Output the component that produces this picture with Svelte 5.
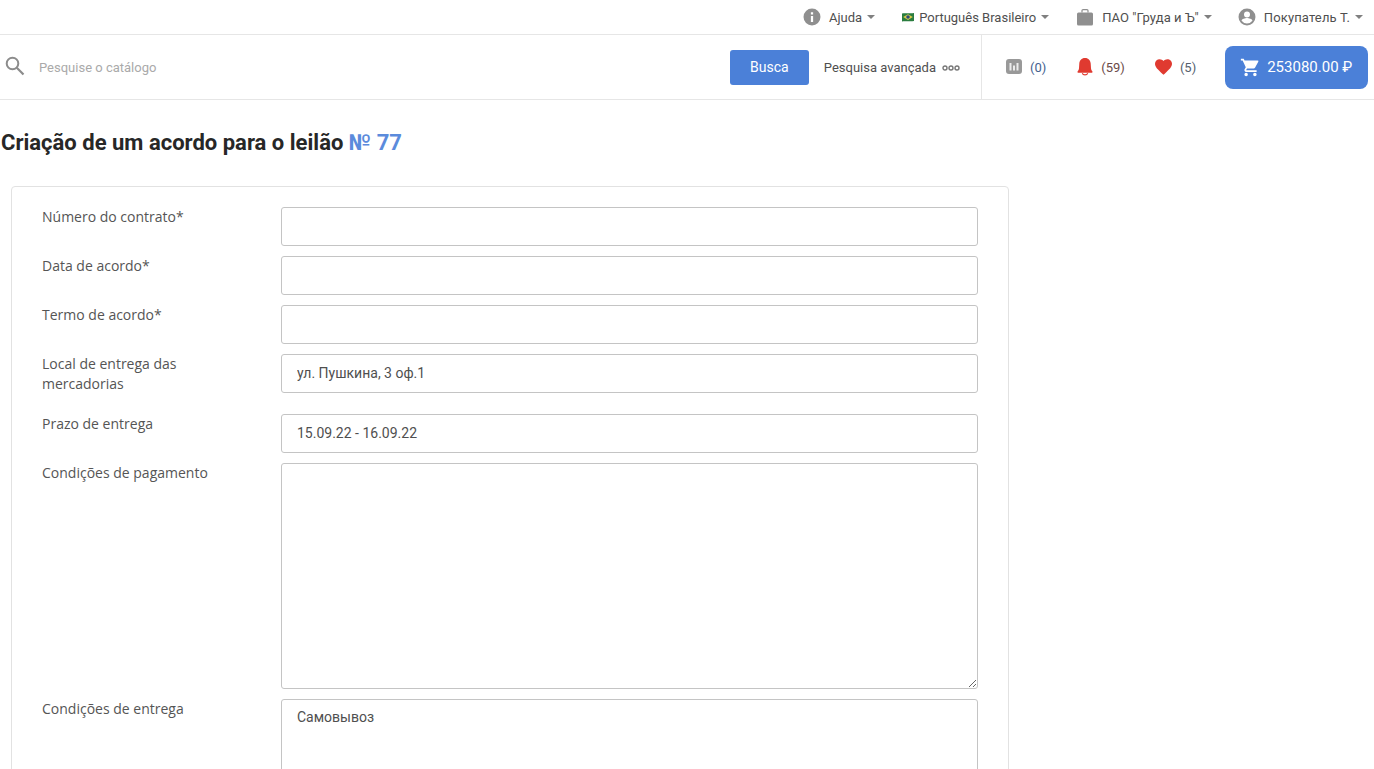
<script>
  const rows = [
    { label: 'Número do contrato*', value: '' },
    { label: 'Data de acordo*', value: '' },
    { label: 'Termo de acordo*', value: '' },
    { label: 'Local de entrega das mercadorias', value: 'ул. Пушкина, 3 оф.1' },
    { label: 'Prazo de entrega', value: '15.09.22 - 16.09.22' }
  ];
</script>

<div class="page">
  <div class="top-bar">
    <div class="top-item ajuda">
      <svg class="top-icon" viewBox="0 0 24 24"><path d="M12 .7a11.300 11.300 0 1 0 0 22.600A11.300 11.300 0 0 0 12 .7zm1.500 17.800h-3v-8h3zm0-10h-3V5.500h3z" fill-rule="evenodd" /></svg>
      <span>Ajuda</span>
      <i class="caret"></i>
    </div>
    <div class="top-item lang">
      <svg class="flag" viewBox="0 0 14 10">
        <path d="M1 1.500C4 .5 9 2 13 1v8C9 10 4 8.500 1 9.500z" fill="#2a7d3f" />
        <path d="M7 2.200 11.800 5 7 8 2.200 5z" fill="#dccc4e" />
        <circle cx="7" cy="5" r="1.800" fill="#2c4a7c" />
      </svg>
      <span>Português Brasileiro</span>
      <i class="caret"></i>
    </div>
    <div class="top-item company">
      <svg class="top-icon" viewBox="0 0 18 18">
        <path d="M6 4.500V2.600a1 1 0 0 1 1-1h4a1 1 0 0 1 1 1v1.900" fill="none" stroke="#8f8f8f" stroke-width="1.200" />
        <rect x="1" y="4.500" width="16" height="13" rx="1.500" />
      </svg>
      <span class="company-name">ПАО "Груда и Ъ"</span>
      <i class="caret"></i>
    </div>
    <div class="top-item user">
      <svg class="top-icon" viewBox="0 0 24 24"><path d="M12 .7a11.300 11.300 0 1 0 0 22.600A11.300 11.300 0 0 0 12 .7zM12 4.500a4 4 0 1 1 0 8 4 4 0 0 1 0-8zm0 16.200a8.900 8.900 0 0 1-7.200-3.700c.1-2.400 4.800-3.600 7.200-3.600s7.100 1.200 7.200 3.600A8.900 8.900 0 0 1 12 20.700z" fill-rule="evenodd" /></svg>
      <span class="user-name">Покупатель Т.</span>
      <i class="caret"></i>
    </div>
  </div>

  <div class="search-bar">
    <div class="search-left">
      <svg class="search-icon" viewBox="0 0 20 20" fill="none" stroke="#8c8c8c" stroke-width="2">
        <circle cx="7.500" cy="7.500" r="5.800" />
        <path d="M11.800 11.800 18.500 18.500" stroke-width="2.200" />
      </svg>
      <input class="search-input" placeholder="Pesquise o catálogo" />
      <button class="search-btn">Busca</button>
      <span class="advanced">Pesquisa avançada</span>
      <svg class="dots" viewBox="0 0 18 6" fill="none" stroke="#777" stroke-width="1.400">
        <circle cx="3" cy="3" r="2" />
        <circle cx="9" cy="3" r="2" />
        <circle cx="15" cy="3" r="2" />
      </svg>
    </div>
    <div class="search-right">
      <div class="counter compare">
        <svg class="compare-icon" viewBox="0 0 16 15">
          <rect width="16" height="15" rx="3" fill="#999" />
          <path d="M4.500 4v7.500M8 6.500v5M11.500 4v7.500" stroke="#ececec" stroke-width="2" />
        </svg>
        <span class="count-blue">(0)</span>
      </div>
      <div class="counter bell">
        <svg class="bell-icon" viewBox="0 0 16 18">
          <path d="M8 0c3.600 0 5.500 2.500 5.700 5.500l.3 4.700c.1 1.400.7 2.200 1.300 3 .5.700.1 1.600-.7 1.600H1.400c-.8 0-1.200-.9-.7-1.600.6-.8 1.200-1.600 1.300-3l.3-4.700C2.500 2.500 4.400 0 8 0z" fill="#e03a30" />
          <path d="M5.300 15.300a2.800 2.200 0 0 0 5.400 0" fill="none" stroke="#e03a30" stroke-width="1.100" />
        </svg>
        <span class="count-red">(59)</span>
      </div>
      <div class="counter heart">
        <svg class="heart-icon" viewBox="0 0 24 22">
          <path d="M12 22 10.300 20.400C4.100 14.800 0 11.100 0 6.500 0 2.800 2.900 0 6.600 0 8.700 0 10.700 1 12 2.500 13.300 1 15.300 0 17.400 0 21.100 0 24 2.800 24 6.500c0 4.600-4.100 8.300-10.300 13.900z" fill="#e03a30" />
        </svg>
        <span class="count-grey">(5)</span>
      </div>
      <button class="cart-btn">
        <svg class="cart-icon" viewBox="0 0 24 24"><path d="M7 18a2 2 0 1 0 0 4 2 2 0 0 0 0-4zM1 2v2h2l3.600 7.600-1.350 2.450A2 2 0 0 0 7 17h12v-2H7.420a.25.25 0 0 1-.25-.25l.03-.12.9-1.630h7.450c.75 0 1.410-.41 1.750-1.030l3.580-6.490A1 1 0 0 0 20 4H5.210l-.94-2zm16 16a2 2 0 1 0 0 4 2 2 0 0 0 0-4z" fill="#fff" /></svg>
        <span>253080.00 ₽</span>
      </button>
    </div>
  </div>

  <h1 class="title">Criação de um acordo para o leilão <span class="number">№ 77</span></h1>

  <div class="card">
    {#each rows as row}
      <div class="row">
        <label class="label">{row.label}</label>
        <input class="field" value={row.value} />
      </div>
    {/each}
    <div class="row">
      <label class="label">Condições de pagamento</label>
      <textarea class="field area"></textarea>
    </div>
    <div class="row">
      <label class="label">Condições de entrega</label>
      <textarea class="field area">Самовывоз</textarea>
    </div>
  </div>
</div>

<style>
  :global(body) {
    margin: 0;
    background: #fff;
  }

  .page {
    height: 769px;
    overflow: hidden;
    font-family: Roboto, sans-serif;
    color: #444;
  }

  .top-bar {
    display: flex;
    justify-content: flex-end;
    align-items: center;
    height: 34px;
    padding-right: 11px;
    border-bottom: 1px solid #e6e6e6;
    font-size: 13px;
  }

  .top-item {
    display: flex;
    align-items: center;
    margin-left: 26px;
    color: #4f4f4f;
  }

  .company {
    margin-left: 27px;
  }

  .company-name {
    letter-spacing: 0.07px;
  }

  .user-name {
    letter-spacing: 0.15px;
  }

  .top-icon {
    width: 18px;
    height: 18px;
    margin-right: 8px;
    fill: #8f8f8f;
  }

  .flag {
    width: 14px;
    height: 10px;
    margin-right: 4px;
  }

  .caret {
    width: 0;
    height: 0;
    margin-left: 5px;
    border-left: 4px solid transparent;
    border-right: 4px solid transparent;
    border-top: 4px solid #808080;
  }

  .search-bar {
    display: flex;
    height: 64px;
    border-bottom: 1px solid #e6e6e6;
  }

  .search-left {
    display: flex;
    align-items: center;
    width: 982px;
    padding-left: 5px;
    box-sizing: border-box;
    border-right: 1px solid #e6e6e6;
  }

  .search-icon {
    width: 20px;
    height: 20px;
    margin-top: -2px;
  }

  .search-input {
    flex: 1;
    min-width: 0;
    margin-left: 14px;
    padding: 0;
    border: none;
    outline: none;
    font: 13px Roboto, sans-serif;
  }

  .search-input::placeholder {
    color: #aaa;
    opacity: 1;
  }

  .search-btn {
    width: 79px;
    height: 35px;
    margin-right: 15px;
    border: none;
    border-radius: 3px;
    background: #4b80d8;
    color: #fff;
    font: 14px Roboto, sans-serif;
  }

  .advanced {
    font-size: 13px;
    color: #4f4f4f;
  }

  .dots {
    width: 18px;
    height: 6px;
    margin: 1px 21px 0 6px;
  }

  .search-right {
    display: flex;
    align-items: center;
    flex: 1;
    padding-left: 23px;
    font-size: 13px;
  }

  .counter {
    display: flex;
    align-items: center;
  }

  .compare {
    margin-right: 31px;
  }

  .bell {
    margin-right: 30px;
  }

  .heart {
    margin-right: 29px;
  }

  .compare-icon {
    width: 16px;
    height: 15px;
    margin: -2px 8px 0 1px;
  }

  .bell-icon {
    width: 16px;
    height: 18px;
    margin-right: 8px;
  }

  .heart-icon {
    width: 17px;
    height: 16px;
    margin-right: 8px;
  }

  .count-blue {
    color: #44618f;
  }

  .count-red {
    color: #6b4a48;
  }

  .count-grey {
    color: #555f6e;
  }

  .cart-btn {
    display: flex;
    align-items: center;
    width: 143px;
    height: 43px;
    padding: 0 0 0 15px;
    border: none;
    border-radius: 8px;
    background: #4b80d8;
    color: #fff;
    font: 15px Roboto, sans-serif;
  }

  .cart-icon {
    width: 21px;
    height: 21px;
    margin-right: 6px;
  }

  .title {
    margin: 30px 0 30px 1px;
    font-size: 22px;
    line-height: 26px;
    font-weight: 700;
    letter-spacing: 0.01px;
    color: #272727;
  }

  .number {
    color: #5b8bdc;
  }

  .card {
    width: 998px;
    box-sizing: border-box;
    margin-left: 11px;
    padding: 20px 30px 20px 30px;
    border: 1px solid #e2e2e2;
    border-radius: 4px;
  }

  .row {
    display: flex;
    align-items: flex-start;
    margin-bottom: 10px;
  }

  .label {
    width: 180px;
    margin: 0 59px 10px 0;
    font: 14px/20px "Open Sans", sans-serif;
    color: #555;
  }

  .field {
    flex: 1;
    min-width: 0;
    height: 39px;
    box-sizing: border-box;
    padding: 0 15px 1px;
    border: 1px solid #c4c4c4;
    border-radius: 3px;
    outline: none;
    font: 14px Roboto, sans-serif;
    color: #4f4f4f;
    background: #fff;
  }

  .area {
    display: block;
    height: 226px;
    padding-top: 9px;
    padding-bottom: 10px;
    line-height: 16px;
  }
</style>
